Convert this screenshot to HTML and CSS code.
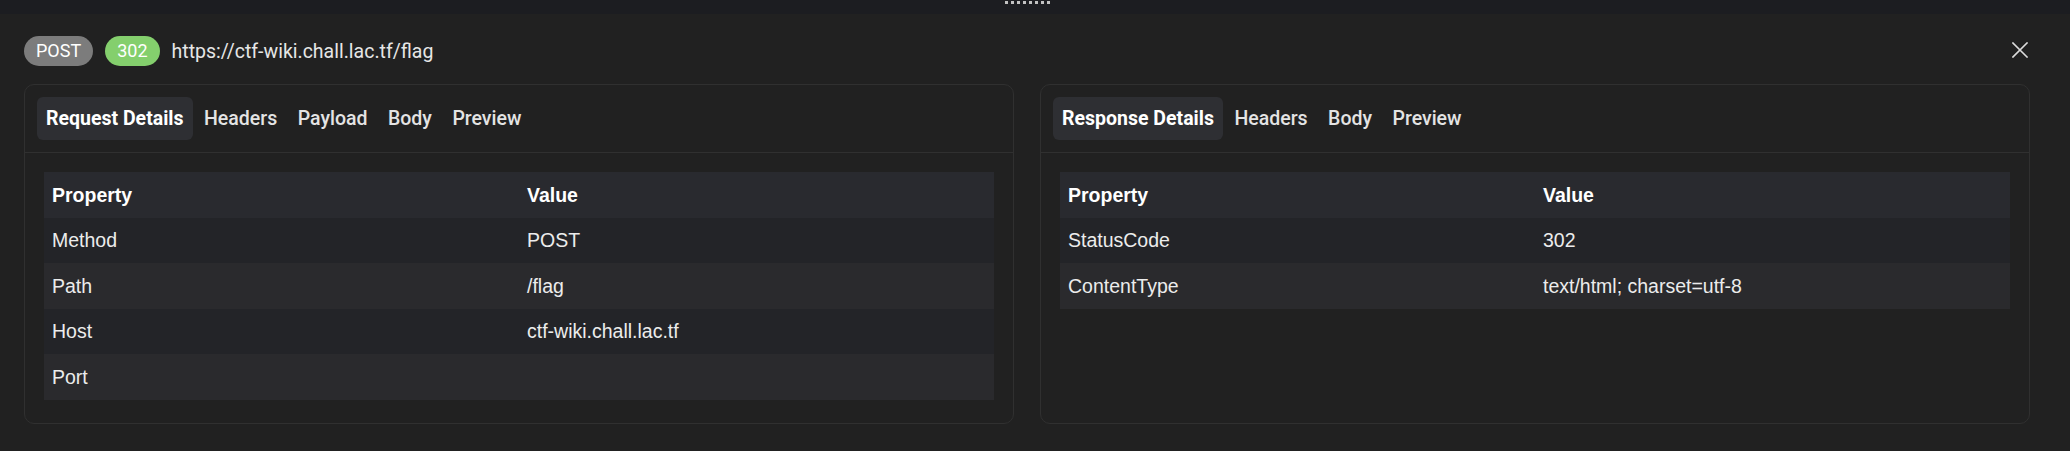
FILE: index.html
```html
<!DOCTYPE html>
<html lang="en">
<head>
<meta charset="utf-8">
<title>Request Inspector</title>
<link rel="stylesheet" href="styles.css">
</head>
<body>
<div class="app">
  <div class="handle-bar">
    <div class="grip"><span></span><span></span><span></span><span></span><span></span><span></span><span></span><span></span></div>
  </div>
  <div class="content">
    <header class="header">
      <span class="badge badge-method">POST</span>
      <span class="badge badge-status">302</span>
      <span class="url">https://ctf-wiki.chall.lac.tf/flag</span>
      <button class="close" aria-label="Close">
        <svg width="16" height="16" viewBox="0 0 16 16"><path d="M1 1 L15 15 M15 1 L1 15" stroke="#dcdcdc" stroke-width="1.6" fill="none" stroke-linecap="square"/></svg>
      </button>
    </header>
    <div class="panels">
      <section class="panel">
        <nav class="tabs">
          <span class="tab active">Request Details</span>
          <span class="tab">Headers</span>
          <span class="tab">Payload</span>
          <span class="tab">Body</span>
          <span class="tab">Preview</span>
        </nav>
        <div class="panel-body">
          <table class="props">
            <thead><tr><th>Property</th><th>Value</th></tr></thead>
            <tbody>
              <tr><td>Method</td><td>POST</td></tr>
              <tr><td>Path</td><td>/flag</td></tr>
              <tr><td>Host</td><td>ctf-wiki.chall.lac.tf</td></tr>
              <tr><td>Port</td><td></td></tr>
            </tbody>
          </table>
        </div>
      </section>
      <section class="panel">
        <nav class="tabs">
          <span class="tab active">Response Details</span>
          <span class="tab">Headers</span>
          <span class="tab">Body</span>
          <span class="tab">Preview</span>
        </nav>
        <div class="panel-body">
          <table class="props">
            <thead><tr><th>Property</th><th>Value</th></tr></thead>
            <tbody>
              <tr><td>StatusCode</td><td>302</td></tr>
              <tr><td>ContentType</td><td>text/html; charset=utf-8</td></tr>
            </tbody>
          </table>
        </div>
      </section>
    </div>
  </div>
</div>
</body>
</html>
```
FILE: styles.css
```css
html, body {
  margin: 0;
  padding: 0;
  background: #212121;
}
body {
  font-family: Roboto, "Liberation Sans", Arial, sans-serif;
  color: #e6e6e6;
  height: 451px;
  overflow: hidden;
}
.handle-bar {
  height: 14px;
  background: #1c1d21;
  display: flex;
  justify-content: center;
  align-items: flex-start;
  padding-right: 16px;
}
.grip {
  display: flex;
  gap: 3px;
  padding-top: 1px;
}
.grip span {
  width: 3px;
  height: 3px;
  background: #c2c2c2;
}
.content {
  padding: 22px 40px 0 24px;
}
.header {
  display: flex;
  align-items: center;
  gap: 12px;
  height: 30px;
}
.badge {
  height: 30px;
  line-height: 30px;
  border-radius: 15px;
  padding: 0 12px;
  font-size: 18px;
  font-weight: 400;
  color: #ffffff;
}
.badge-method {
  background: #7c7c7c;
}
.badge-status {
  background: #84cf6d;
}
.url {
  font-size: 19.5px;
  color: #e6e6e6;
}
.close {
  margin-left: auto;
  margin-right: 2px;
  margin-bottom: 3px;
  width: 16px;
  height: 16px;
  padding: 0;
  border: none;
  background: none;
  display: flex;
}
.panels {
  margin-top: 18px;
  display: grid;
  grid-template-columns: 1fr 1fr;
  gap: 26px;
  height: 340px;
}
.panel {
  border: 1px solid #303030;
  border-radius: 10px;
  background: #212121;
  box-sizing: border-box;
}
.tabs {
  display: flex;
  gap: 2.5px;
  padding: 12px;
  border-bottom: 1px solid #303030;
}
.tab {
  font-size: 19.5px;
  line-height: 23px;
  padding: 10px 9px;
  border-radius: 6px;
  color: #e4e4e4;
  font-weight: 500;
}
.tab.active {
  background: #2e2f33;
  font-weight: 700;
  color: #ffffff;
}
.panel-body {
  padding: 19px;
}
.props {
  width: 100%;
  border-collapse: collapse;
  table-layout: fixed;
  font-family: "Liberation Sans", Arial, sans-serif;
  font-size: 19.5px;
}
.props th,
.props td {
  text-align: left;
  padding: 11.5px 8px;
  line-height: 22.6px;
  height: 22.6px;
}
.props th {
  font-weight: 700;
  color: #ffffff;
}
.props td {
  color: #ececec;
}
.props thead tr {
  background: #292a2f;
}
.props tbody tr:nth-child(odd) {
  background: #232428;
}
.props tbody tr:nth-child(even) {
  background: #2a2a2d;
}
```
